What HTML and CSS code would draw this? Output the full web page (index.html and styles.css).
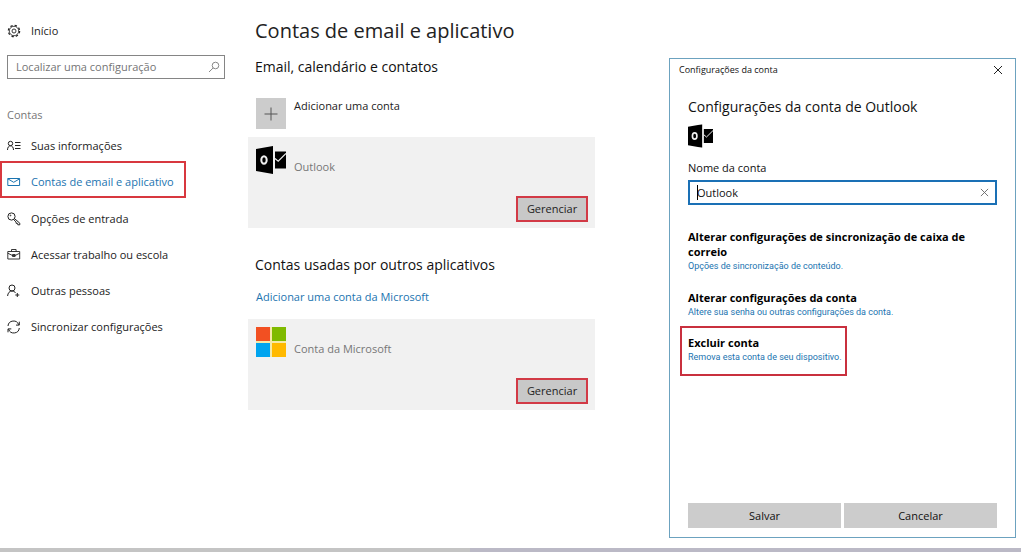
FILE: index.html
```html
<!DOCTYPE html>
<html lang="pt-BR">
<head>
<meta charset="utf-8">
<meta name="viewport" content="width=device-width, initial-scale=1">
<title>Contas de email e aplicativo</title>
<link rel="stylesheet" href="styles.css">
</head>
<body class="page">
<svg class="symbols" aria-hidden="true">
  <symbol id="outlook" viewBox="0 0 30 28">
    <path d="M0 3 17 0v28L0 25z" fill="#000"/>
    <path d="M19 5.500h11v17H19z" fill="#000"/>
    <path d="m19 12.500 3.200 2.700L30 7.500" fill="none" stroke="#eee" stroke-width="1.200"/>
    <ellipse cx="8" cy="14" rx="2.700" ry="3.800" fill="none" stroke="#eee" stroke-width="2"/>
  </symbol>
</svg>
<div class="layout">
  <nav class="sidebar" aria-label="Configurações">
    <a class="nav-link home" href="#">
      <svg class="icon" viewBox="0 0 14 14"><circle cx="7" cy="7" r="5.600" stroke-width="1.300" stroke-dasharray="2.300 2.100"/><circle cx="7" cy="7" r="4.700" stroke-width=".8"/><circle cx="7" cy="7" r="2" stroke-width=".9"/></svg>
      Início
    </a>
    <div class="search">
      <input class="search-input" type="search" placeholder="Localizar uma configuração" aria-label="Localizar uma configuração">
      <svg class="search-icon" viewBox="0 0 12 12"><circle cx="7.500" cy="4.500" r="3.300"/><path d="M5.200 6.900 1 11"/></svg>
    </div>
    <h2 class="nav-title">Contas</h2>
    <ul class="nav-list">
      <li><a class="nav-link" href="#"><svg class="icon" viewBox="0 0 14 14"><circle cx="3.500" cy="4.500" r="2.200"/><path d="M.5 11c0-2.700 1.300-4.200 3-4.200s3 1.500 3 4.200M8 3.500h5.500M8 6.500h5.500M8 9.500h5.500"/></svg>Suas informações</a></li>
      <li><a class="nav-link active" href="#" aria-current="page"><svg class="icon" viewBox="0 0 14 14"><path d="M.8 3.500h11.800v7H.8zM.8 3.800l5.900 3.500 5.900-3.500"/></svg>Contas de email e aplicativo</a></li>
      <li><a class="nav-link" href="#"><svg class="icon" viewBox="0 0 14 14"><circle cx="4.500" cy="4.500" r="3.600"/><path d="m7.500 6.600 5.300 4.600v1.600h-2l-.2-1.400H9.200L9 9.900l-2.400-2.400"/><circle cx="3.500" cy="3.500" r=".4"/></svg>Opções de entrada</a></li>
      <li><a class="nav-link" href="#"><svg class="icon" viewBox="0 0 14 14"><path d="M.8 3.500h11.900V11H.8zM4.500 3.500V1.500h4.600v2M.8 5.200 5.500 7.500h2.600l4.600-2.300M5.500 6.500h2.600v2H5.500z" stroke-width=".9"/></svg>Acessar trabalho ou escola</a></li>
      <li><a class="nav-link" href="#"><svg class="icon" viewBox="0 0 14 14"><circle cx="5" cy="4" r="3"/><path d="M.6 12c.2-3 1.900-5 4.400-5 1.700 0 2.900.8 3.600 2M10.300 9v4M8.300 11h4"/></svg>Outras pessoas</a></li>
      <li><a class="nav-link" href="#"><svg class="icon" viewBox="0 0 14 14"><path d="M1 6a5.500 5.500 0 0 1 10.700-1.200M12.300 1.700v3.400H9M12.300 8A5.500 5.500 0 0 1 1.600 9.200M1 12.300V8.900h3.300"/></svg>Sincronizar configurações</a></li>
    </ul>
  </nav>

  <main class="main">
    <h1 class="title">Contas de email e aplicativo</h1>
    <h2 class="subtitle">Email, calendário e contatos</h2>
    <button class="add" type="button">
      <svg class="add-icon" viewBox="0 0 30 30"><path d="M15 9v13M8.500 15.500h13"/></svg>
      <span>Adicionar uma conta</span>
    </button>
    <section class="card">
      <div class="account"><svg class="logo" viewBox="0 0 30 28"><use href="#outlook"/></svg><span>Outlook</span></div>
      <button class="manage" type="button">Gerenciar</button>
    </section>
    <h2 class="subtitle others">Contas usadas por outros aplicativos</h2>
    <a class="link" href="#">Adicionar uma conta da Microsoft</a>
    <section class="card">
      <div class="account">
        <svg class="logo" viewBox="0 0 30 30"><path fill="#f5e9a8" d="M0 0h30v30H0z"/><path fill="#f25022" d="M0 0h14v14H0z"/><path fill="#7fba00" d="M16 0h14v14H16z"/><path fill="#00a4ef" d="M0 16h14v14H0z"/><path fill="#ffb900" d="M16 16h14v14H16z"/></svg>
        <span>Conta da Microsoft</span>
      </div>
      <button class="manage" type="button">Gerenciar</button>
    </section>
  </main>

  <form class="dialog" role="dialog" aria-labelledby="dialog-title">
    <header class="dialog-bar">
      <span>Configurações da conta</span>
      <button class="close" type="button" aria-label="Fechar"><svg class="cross" viewBox="0 0 10 10"><path d="m1 1 8 8M9 1 1 9"/></svg></button>
    </header>
    <div class="dialog-body">
      <h2 class="dialog-title" id="dialog-title">Configurações da conta de Outlook</h2>
      <svg class="dialog-logo" viewBox="0 0 30 28"><use href="#outlook"/></svg>
      <label class="label" for="account-name">Nome da conta</label>
      <div class="field">
        <input class="field-input" id="account-name" type="text" value="Outlook">
        <span class="caret"></span>
        <button class="clear" type="button" aria-label="Limpar"><svg class="cross small" viewBox="0 0 10 10"><path d="m1 1 8 8M9 1 1 9"/></svg></button>
      </div>
      <section class="option">
        <h3 class="option-title">Alterar configurações de sincronização de caixa de correio</h3>
        <a class="option-link" href="#">Opções de sincronização de conteúdo.</a>
      </section>
      <section class="option">
        <h3 class="option-title">Alterar configurações da conta</h3>
        <a class="option-link" href="#">Altere sua senha ou outras configurações da conta.</a>
      </section>
      <section class="option marked">
        <h3 class="option-title">Excluir conta</h3>
        <a class="option-link" href="#">Remova esta conta de seu dispositivo.</a>
      </section>
      <footer class="actions">
        <button class="action" type="submit">Salvar</button>
        <button class="action" type="button">Cancelar</button>
      </footer>
    </div>
  </form>
</div>
<div class="strip"></div>
</body>
</html>
```
FILE: styles.css
```css
* { box-sizing: border-box; }

.page {
  display: flex;
  flex-direction: column;
  min-height: 100vh;
  margin: 0;
  background: #fff;
  color: #222;
  font: 11px/16px "Open Sans", "Noto Sans", sans-serif;
}

h1, h2, h3, ul { margin: 0; padding: 0; font-weight: 400; }
button, input { font: inherit; color: inherit; border: 0; border-radius: 0; padding: 0; }
a { text-decoration: none; }
svg { display: block; fill: none; flex: none; }
.symbols { position: absolute; width: 0; height: 0; }

.layout {
  flex: 1;
  display: grid;
  grid-template-columns: 248px minmax(300px, 1fr) 421px;
  padding-right: 5px;
}

/* Sidebar */
.sidebar { padding-top: 13px; }
.nav-link {
  display: flex;
  align-items: center;
  gap: 10px;
  height: 36px;
  padding-left: 7px;
  color: #222;
  white-space: nowrap;
}
.icon { width: 14px; height: 14px; stroke: currentColor; }
.home { margin-bottom: 6px; }
.search {
  display: flex;
  align-items: center;
  width: 218px;
  height: 24px;
  margin-left: 7px;
  padding: 0 4px 0 8px;
  border: 1px solid #858585;
}
.search-input { flex: 1; min-width: 0; background: none; outline: 0; appearance: none; }
.search-input::placeholder { color: #757575; opacity: 1; }
.search-icon { width: 12px; height: 12px; stroke: #888; }
.nav-title { margin: 28px 0 5px 7px; font-size: 11px; color: #777; }
.nav-list { list-style: none; }
.nav-link.active {
  width: 186px;
  height: 37px;
  margin: -3px 0 3px;
  padding: 5px 0 0 5px;
  border: 2px solid #d8383f;
  color: #1b74b0;
}

/* Accounts */
.main { padding-top: 17px; }
.title { margin-left: 7px; font-size: 20px; line-height: 28px; }
.subtitle { margin: 12px 0 0 7px; font-size: 14px; line-height: 20px; color: #111; }
.add {
  display: flex;
  gap: 8px;
  margin: 21px 0 8px 8px;
  background: none;
}
.add-icon { width: 30px; height: 31px; background: #ccc; stroke: #555; }
.card {
  display: flex;
  flex-direction: column;
  justify-content: space-between;
  min-height: 91px;
  padding: 8px 7px 6px 8px;
  background: #f1f1f1;
}
.account { display: flex; gap: 8px; align-items: flex-end; height: 30px; color: #777; }
.logo { width: 30px; height: 30px; }
.manage { align-self: flex-end; width: 72px; height: 26px; background: #c8c8c8; border: 2px solid #d23a46; }
.others { margin-top: 27px; }
.link { display: block; margin: 14px 0 14px 8px; color: #1b74b0; }

/* Dialog */
.dialog {
  display: flex;
  flex-direction: column;
  min-height: 480px;
  margin: 58px 0 10px 74px;
  border: 1px solid #6ca2bf;
  color: #111;
}
.dialog-bar {
  display: flex;
  align-items: center;
  justify-content: space-between;
  height: 22px;
  padding: 0 12px 0 9px;
  font-size: 9px;
}
.close, .clear { background: none; }
.cross { width: 10px; height: 10px; stroke: #222; }
.small { width: 9px; height: 9px; stroke: #666; }
.dialog-body { flex: 1; display: flex; flex-direction: column; padding: 16px 18px 9px; }
.dialog-title { font-size: 14px; line-height: 20px; }
.dialog-logo { width: 25px; height: 24px; margin: 7px 0 12px; }
.label { margin-bottom: 4px; }
.field {
  position: relative;
  display: flex;
  align-items: center;
  height: 25px;
  padding: 0 6px 0 7px;
  border: 2px solid #1a70b5;
}
.field-input { flex: 1; min-width: 0; background: none; outline: 0; }
.caret { position: absolute; left: 7px; top: 3px; width: 1px; height: 15px; background: #000; }
.option { margin-top: 17px; }
.field + .option { margin-top: 24px; }
.option-title { font-size: 11px; line-height: 15px; font-weight: 700; color: #000; }
.option-link { display: block; font: 9px/14px Roboto, "Open Sans", sans-serif; color: #1b74b0; white-space: nowrap; }
.option.marked {
  width: 167px;
  min-height: 50px;
  margin: 7px 0 0 -8px;
  padding: 7px 0 0 6px;
  border: 2px solid #c9303e;
}
.actions { display: flex; gap: 3px; margin-top: auto; }
.action { flex: 1; height: 25px; background: #ccc; }

.strip { height: 4px; background: linear-gradient(to right, #c4c4c4 46%, #bbb9c6 46%); }
```
